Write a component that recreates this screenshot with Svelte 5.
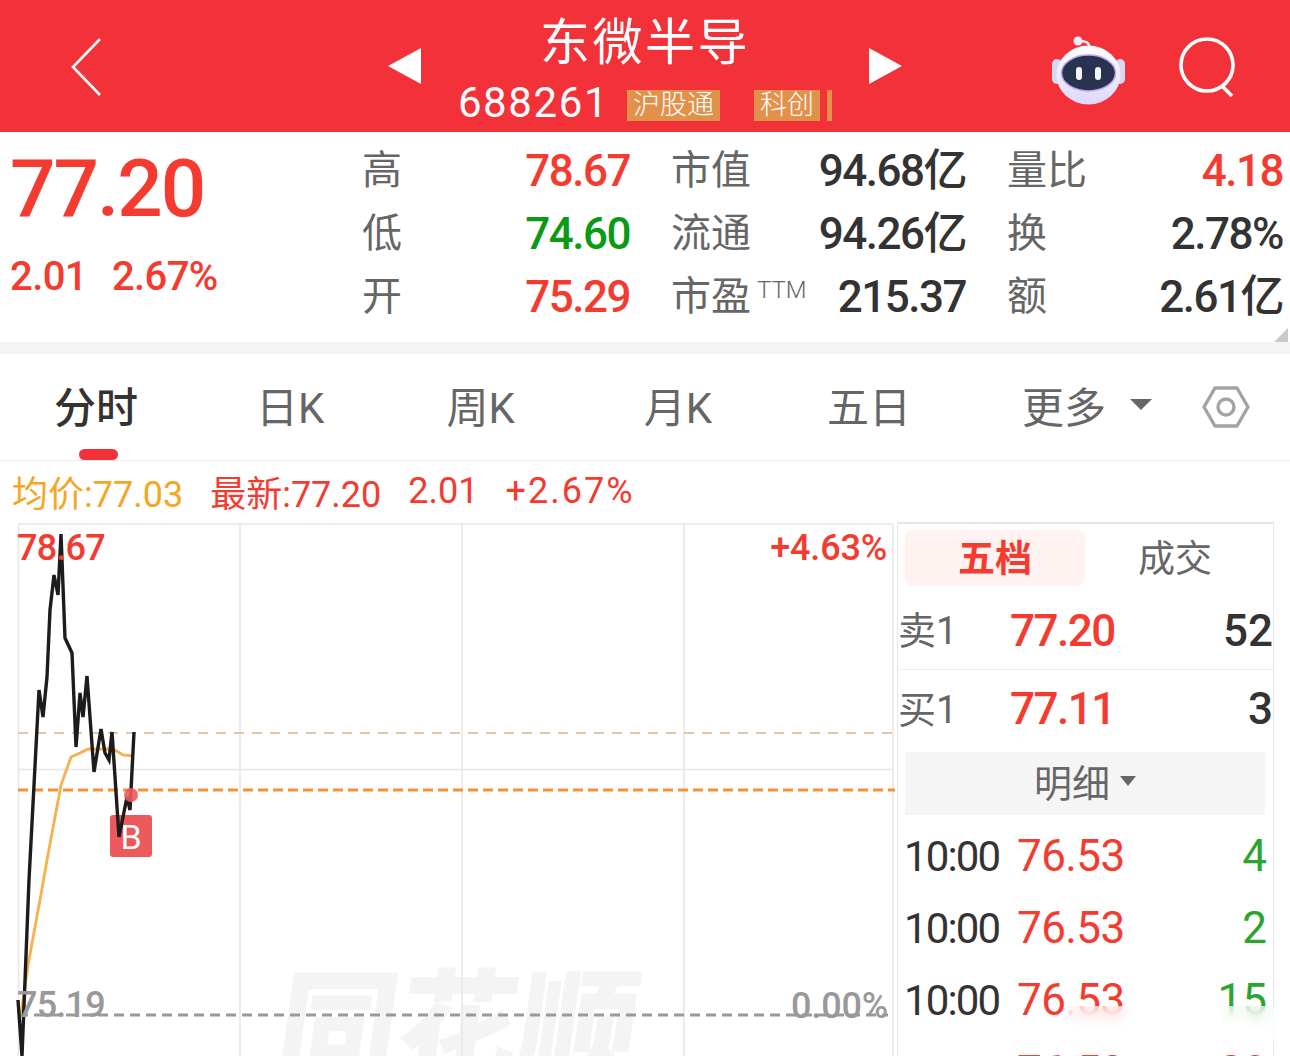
<script>
	const stats = [
		{ label: '高', value: '78.67', tone: 'up', label2: '市值', value2: '94.68亿', label3: '量比', value3: '4.18', tone3: 'up' },
		{ label: '低', value: '74.60', tone: 'down', label2: '流通', value2: '94.26亿', label3: '换', value3: '2.78%', tone3: '' },
		{ label: '开', value: '75.29', tone: 'up', label2: '市盈', ttm: true, value2: '215.37', label3: '额', value3: '2.61亿', tone3: '' }
	];
	const tabs = ['分时', '日K', '周K', '月K', '五日'];
	const ticks = [
		{ time: '10:00', price: '76.53', vol: '4', tone: 'down' },
		{ time: '10:00', price: '76.53', vol: '2', tone: 'down' },
		{ time: '10:00', price: '76.53', vol: '15', tone: 'down' },
		{ time: '10:00', price: '76.53', vol: '20', tone: 'up' }
	];
	// chart points in page coordinates, the board starts at y = 522
	const pricePts = [[18,1000],[22,1056],[29,880],[39,690],[43,717],[47,677],[50,610],[54,575],[58,595],[61,534],[65,638],[72,653],[76,747],[80,693],[83,717],[87,676],[94,772],[101,729],[105,753],[109,760],[112,732],[119,837],[127,797],[130,810],[134,732]];
	const avgPts = [[21,1015],[28,965],[40,900],[47,860],[61,785],[71,757],[80,753],[88,749],[113,749],[123,755],[134,756]];
	const toLine = (pts) => pts.map(([x, y]) => `${x},${y - 522}`).join(' ');
</script>

<div class="page">
	<header class="topbar">
		<svg class="back" viewBox="0 0 32 60" width="32" height="60"><path d="M30 2 L3 30 L30 58" fill="none" stroke="#fff" stroke-width="2.6"/></svg>
		<div class="switcher">
			<span class="tri left"></span>
			<div class="title">
				<div class="name">东微半导</div>
				<div class="code">
					<span class="num">688261</span>
					<span class="tag">沪股通</span>
					<span class="tag second">科创</span>
					<span class="sliver"></span>
				</div>
			</div>
			<span class="tri right"></span>
		</div>
		<div class="tools">
			<svg class="robot" viewBox="0 0 74 70" width="74" height="70">
				<defs>
					<linearGradient id="shell" x1="0" y1="0" x2="0" y2="1">
						<stop offset="0" stop-color="#ffffff"/>
						<stop offset="1" stop-color="#dcd8fa"/>
					</linearGradient>
				</defs>
				<path d="M37 11 q1 -6 -10 -6" fill="none" stroke="#f1eefc" stroke-width="2.5"/>
				<circle cx="26" cy="5" r="4.5" fill="#f1eefc"/>
				<rect x="0" y="23" width="10" height="25" rx="5" fill="#d9d6f3"/>
				<rect x="63" y="23" width="10" height="25" rx="5" fill="#d9d6f3"/>
				<ellipse cx="36.5" cy="39" rx="32" ry="29.5" fill="url(#shell)"/>
				<ellipse cx="36.5" cy="37" rx="27" ry="18" fill="#2a3252" stroke="#b9a8f0" stroke-width="1.5"/>
				<rect x="24" y="31" width="6" height="13" rx="3" fill="#f4f5fd"/>
				<rect x="43" y="31" width="6" height="13" rx="3" fill="#f4f5fd"/>
			</svg>
			<svg class="search" viewBox="0 0 60 62" width="60" height="62"><circle cx="29" cy="29" r="26" fill="none" stroke="#fff" stroke-width="3.6"/><path d="M44 50 L54 60" stroke="#fff" stroke-width="3.6"/></svg>
		</div>
	</header>

	<section class="quote">
		<div class="price">
			<div class="last">77.20</div>
			<div class="change"><span>2.01</span><span>2.67%</span></div>
		</div>
		<div class="stats">
			{#each stats as s}
				<span class="label">{s.label}</span>
				<span class="value {s.tone}">{s.value}</span>
				<span class="label gap">{s.label2}{#if s.ttm}<small>TTM</small>{/if}</span>
				<span class="value dark">{s.value2}</span>
				<span class="label gap">{s.label3}</span>
				<span class="value {s.tone3 || 'dark'}">{s.value3}</span>
			{/each}
		</div>
		<span class="corner"></span>
	</section>
	<div class="divider"></div>

	<nav class="tabs">
		{#each tabs as t, i}
			<span class="tab tab{i}" class:active={i === 0}>{t}</span>
		{/each}
		<span class="tab more">更多<i class="caret"></i></span>
		<svg class="gear" viewBox="0 0 48 44" width="48" height="44">
			<path d="M13 3 H35 L46 22 L35 41 H13 L2 22 Z" fill="none" stroke="#a3a3a3" stroke-width="3.4" stroke-linejoin="round"/>
			<circle cx="24" cy="22" r="8" fill="none" stroke="#a3a3a3" stroke-width="3.4"/>
		</svg>
	</nav>

	<div class="legend">
		<span class="avg">均价:77.03</span>
		<span>最新:77.20</span>
		<span>2.01</span>
		<span class="pct">+2.67%</span>
	</div>

	<main class="board">
		<div class="chart">
			<span class="watermark">同花顺</span>
			<span class="marker">B</span>
			<svg class="plot" viewBox="0 0 897 534" width="897" height="534">
				<path d="M18.5 2 H893 M18.5 2 V534 M240 2 V534 M462 2 V534 M684 2 V534 M893 2 V534 M18 247.5 H893" stroke="#e6e6e6" stroke-width="1.5" fill="none"/>
				<path d="M18 211 H893" stroke="#e0b48c" stroke-width="1.5" stroke-dasharray="10 8" fill="none"/>
				<path d="M18 268 H895" stroke="#f4913a" stroke-width="3" stroke-dasharray="10 5" fill="none"/>
				<path d="M18 493 H888" stroke="#9a9a9a" stroke-width="2.8" stroke-dasharray="10 6" fill="none"/>
				<polyline points={toLine(avgPts)} fill="none" stroke="#f8b04c" stroke-width="2.8"/>
				<polyline points={toLine(pricePts)} fill="none" stroke="#1c1c1c" stroke-width="3.4" stroke-linejoin="miter"/>
				<circle cx="131" cy="273" r="7" fill="#ec5a5c" opacity="0.9"/>
			</svg>
			<span class="axis tl">78.67</span>
			<span class="axis tr">+4.63%</span>
			<span class="axis bl">75.19</span>
			<span class="axis br">0.00%</span>
		</div>

		<aside class="side">
			<div class="side-tabs">
				<span class="st on">五档</span>
				<span class="st">成交</span>
			</div>
			<div class="level sell">
				<span class="lv">卖1</span><span class="up">77.20</span><span class="qty">52</span>
			</div>
			<div class="level">
				<span class="lv">买1</span><span class="up">77.11</span><span class="qty">3</span>
			</div>
			<div class="detail">明细<i class="caret small"></i></div>
			{#each ticks as t}
				<div class="tick">
					<span class="time">{t.time}</span>
					<span class="up">{t.price}</span>
					<span class="vol {t.tone}">{t.vol}</span>
				</div>
			{/each}
		</aside>
	</main>
	<div class="smudge"></div>
</div>

<style>
	:global(body) {
		margin: 0;
		background: #fff;
	}

	.page {
		position: relative;
		width: 1290px;
		height: 1056px;
		overflow: hidden;
		font-family: Roboto, "Noto Sans CJK SC", sans-serif;
		color: #333;
	}

	.topbar {
		height: 132px;
		background: #f33139;
		display: grid;
		grid-template-columns: 1fr auto 1fr;
		align-items: center;
		color: #fff;
	}

	.back {
		margin: 2px 0 0 70px;
	}

	.switcher {
		display: flex;
		align-items: center;
		gap: 36px;
	}

	.tri {
		width: 0;
		height: 0;
		border-top: 18px solid transparent;
		border-bottom: 18px solid transparent;
	}

	.tri.left {
		border-right: 33px solid #fff;
	}

	.tri.right {
		border-left: 33px solid #fff;
	}

	.title {
		display: flex;
		flex-direction: column;
		align-items: center;
		width: 376px;
	}

	.name {
		font-size: 50px;
		line-height: 58px;
		letter-spacing: 2.5px;
		margin-top: 10px;
		font-weight: 400;
	}

	.code {
		display: flex;
		align-items: center;
		margin-top: 6px;
	}

	.num {
		font-size: 42px;
		line-height: 50px;
		letter-spacing: 1.6px;
		margin-right: 18px;
	}

	.tag {
		background: #e2914a;
		font-size: 27px;
		line-height: 31px;
		height: 31px;
		padding: 0 6px;
		margin-top: 4px;
		color: #fff;
		font-weight: 300;
	}

	.tag.second {
		margin-left: 34px;
	}

	.sliver {
		width: 5px;
		height: 31px;
		margin-top: 4px;
		background: #e2914a;
		margin-left: 7px;
	}

	.tools {
		display: flex;
		justify-content: flex-end;
		align-items: center;
		gap: 52px;
		padding-right: 52px;
	}

	.robot {
		margin-top: 10px;
	}

	.search {
		margin-top: 2px;
	}

	.quote {
		position: relative;
		height: 210px;
		display: flex;
		background: #fff;
	}

	.price {
		width: 362px;
		padding-left: 10px;
		box-sizing: border-box;
		color: #f53a2f;
		flex: none;
	}

	.last {
		font-size: 80px;
		line-height: 94px;
		margin-top: 10px;
		font-weight: 500;
		letter-spacing: -2px;
	}

	.change {
		display: flex;
		gap: 25px;
		font-size: 40px;
		line-height: 44px;
		margin-top: 19px;
		font-weight: 500;
		letter-spacing: -0.6px;
	}

	.stats {
		display: grid;
		grid-template-columns: 38px 230px 140px 196px 120px 197px;
		grid-template-rows: repeat(3, 63px);
		align-items: center;
		margin-top: 7px;
		flex: none;
		height: 189px;
	}

	.label {
		font-size: 40px;
		color: #666;
		line-height: 44px;
		white-space: nowrap;
	}

	.label.gap {
		margin-left: 41px;
	}

	.label small {
		font-size: 24px;
		line-height: 0;
		margin-left: 6px;
		vertical-align: 12px;
		font-weight: 300;
	}

	.value {
		font-size: 44px;
		line-height: 50px;
		text-align: right;
		font-weight: 500;
		letter-spacing: -1.5px;
		white-space: nowrap;
	}

	.up {
		color: #f53a2f;
	}

	.down {
		color: #0a9a16;
	}

	.dark {
		color: #333;
	}

	.corner {
		position: absolute;
		right: 2px;
		bottom: 0;
		width: 0;
		height: 0;
		border-left: 14px solid transparent;
		border-bottom: 14px solid #c9c9c9;
	}

	.divider {
		height: 12px;
		background: #f5f5f5;
	}

	.tabs {
		position: relative;
		height: 107px;
		box-sizing: border-box;
		border-bottom: 1px solid #ececec;
		display: flex;
		align-items: center;
		font-size: 42px;
		color: #666;
	}

	.tab {
		white-space: nowrap;
		margin-bottom: 6px;
	}

	.tab0 {
		margin-left: 54px;
		color: #333;
		font-weight: 500;
	}

	.tab0::after {
		content: '';
		position: absolute;
		left: 79px;
		bottom: 0;
		width: 39px;
		height: 11px;
		border-radius: 6px;
		background: #f33139;
	}

	.tab1 {
		margin-left: 118px;
	}

	.tab2 {
		margin-left: 122px;
	}

	.tab3 {
		margin-left: 129px;
	}

	.tab4 {
		margin-left: 115px;
	}

	.more {
		margin-left: 111px;
		display: flex;
		align-items: center;
	}

	.caret {
		display: inline-block;
		width: 0;
		height: 0;
		margin-left: 24px;
		border-left: 11px solid transparent;
		border-right: 11px solid transparent;
		border-top: 11px solid #666;
	}

	.caret.small {
		margin-left: 10px;
		border-left-width: 8px;
		border-right-width: 8px;
		border-top-width: 10px;
	}

	.gear {
		margin-left: 50px;
	}

	.legend {
		height: 61px;
		display: flex;
		align-items: center;
		gap: 27px;
		padding: 0 0 2px 12px;
		box-sizing: border-box;
		font-size: 36px;
		color: #f53a2f;
	}

	.legend .avg {
		color: #f5a623;
	}

	.legend .pct {
		letter-spacing: 2px;
	}

	.board {
		position: relative;
		display: flex;
		height: 534px;
	}

	.chart {
		position: relative;
		width: 897px;
		flex: none;
	}

	.plot {
		position: absolute;
		left: 0;
		top: 0;
	}

	.watermark {
		position: absolute;
		left: 278px;
		top: 432px;
		font-size: 120px;
		line-height: 150px;
		font-weight: 900;
		color: #f4f4f4;
		transform: skewX(-8deg);
		white-space: nowrap;
	}

	.axis {
		position: absolute;
		font-size: 36px;
		line-height: 40px;
		font-weight: 500;
		letter-spacing: -0.8px;
	}

	.tl {
		left: 17px;
		top: 6px;
		color: #f53a2f;
	}

	.tr {
		right: 10px;
		top: 6px;
		color: #f53a2f;
		letter-spacing: -0.2px;
	}

	.bl {
		left: 17px;
		top: 463px;
		color: #999;
	}

	.br {
		right: 9px;
		top: 464px;
		color: #999;
		letter-spacing: -0.2px;
	}

	.marker {
		position: absolute;
		left: 110px;
		top: 293px;
		width: 42px;
		height: 42px;
		border-radius: 3px;
		background: #ec5a5c;
		color: #fff;
		font-size: 34px;
		line-height: 44px;
		text-align: center;
	}

	.side {
		width: 377px;
		height: 534px;
		box-sizing: border-box;
		border-top: 2px solid #e6e6e6;
		border-right: 1.5px solid #e6e6e6;
		border-left: 1.5px solid #e6e6e6;
		flex: none;
		overflow: hidden;
	}

	.side-tabs {
		display: flex;
		padding: 6px 0 0 7px;
		font-size: 37px;
		color: #666;
	}

	.st {
		width: 180px;
		height: 56px;
		line-height: 60px;
		text-align: center;
		border-radius: 8px;
	}

	.st.on {
		background: #fff2f1;
		color: #f53a2f;
		font-weight: 700;
	}

	.level {
		display: grid;
		grid-template-columns: 112px 1fr auto;
		align-items: center;
		height: 78px;
		font-size: 44px;
		font-weight: 500;
		box-sizing: border-box;
	}

	.level.sell {
		margin-top: 6px;
		border-bottom: 1.5px solid #eee;
	}

	.level .up {
		letter-spacing: -1.5px;
	}

	.lv {
		font-size: 38px;
		color: #666;
		font-weight: 400;
		margin-bottom: 6px;
	}

	.qty {
		color: #333;
	}

	.detail {
		margin: 4px 8px 5px 7px;
		height: 63px;
		padding-bottom: 6px;
		box-sizing: border-box;
		background: #f5f5f5;
		display: flex;
		align-items: center;
		justify-content: center;
		font-size: 38px;
		color: #666;
	}

	.tick {
		display: grid;
		grid-template-columns: 113px 1fr auto;
		align-items: center;
		height: 72px;
		padding: 0 6px;
		font-size: 44px;
	}

	.tick .up {
		letter-spacing: -0.6px;
	}

	.time {
		font-size: 42px;
		letter-spacing: -1.9px;
	}

	.vol.down {
		color: #2aa52f;
	}

	.smudge {
		position: absolute;
		left: 1063px;
		top: 1006px;
		width: 214px;
		height: 36px;
		border-radius: 8px;
		background: rgba(255, 255, 255, 0.55);
		backdrop-filter: blur(7px);
	}
</style>
